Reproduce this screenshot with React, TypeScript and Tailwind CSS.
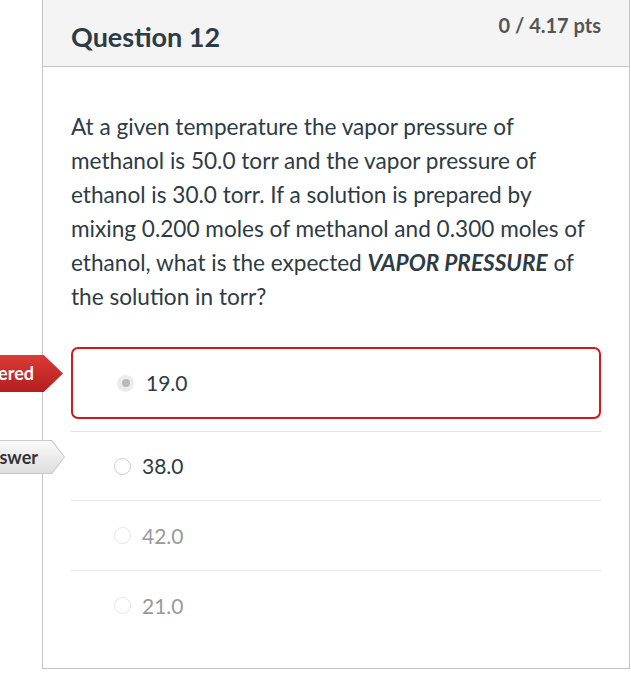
import React from "react";

// Tarjeta de pregunta de examen (estilo Canvas) con respuestas y etiquetas laterales.

function Radio({ state }: { state: "checked" | "empty" | "faded" }) {
  if (state === "checked") {
    return (
      <span className="flex h-[17px] w-[17px] shrink-0 items-center justify-center rounded-full bg-[#ececec]">
        <span className="h-[8px] w-[8px] rounded-full bg-[#b9b9b9]" />
      </span>
    );
  }
  return (
    <span
      className={
        state === "empty"
          ? "h-[17px] w-[17px] shrink-0 rounded-full border-[1.5px] border-[#cfcfcf] bg-white"
          : "h-[17px] w-[17px] shrink-0 rounded-full border-[1.5px] border-[#e6e6e6] bg-white"
      }
    />
  );
}

function RedTag() {
  return (
    <div className="absolute right-full top-[8px] mr-[8px] h-[37px] w-[160px] bg-gradient-to-b from-[#dc3b36] to-[#b31d1d] [clip-path:polygon(0_0,88%_0,100%_50%,88%_100%,0_100%)]">
      <div className="flex h-full items-center justify-end pr-[29px] text-[18px] font-bold text-white">
        You Answered
      </div>
    </div>
  );
}

function GrayTag() {
  return (
    <div className="absolute right-full top-[8px] mr-[6px] h-[34px] w-[160px] bg-[#c9c9c9] [clip-path:polygon(0_0,92%_0,100%_50%,92%_100%,0_100%)]">
      <div className="absolute inset-[1px] bg-gradient-to-b from-[#fafafa] to-[#dedede] [clip-path:polygon(0_0,92%_0,100%_50%,92%_100%,0_100%)]">
        <div className="flex h-full items-center justify-end pr-[26px] text-[18px] font-bold text-[#333]">
          Correct Answer
        </div>
      </div>
    </div>
  );
}

export default function App() {
  return (
    <div className="min-h-[700px] w-[631px] overflow-hidden bg-white font-['Lato','Liberation_Sans',sans-serif] text-[#2d3b45]">
      <div className="ml-[42px] mr-[1px] border-x border-b border-[#c4c4c4]">
        {/* Encabezado de la pregunta */}
        <div className="flex h-[67px] items-start justify-between border-b border-[#c4c4c4] bg-[#f4f4f4] px-[28px]">
          <h2 className="pt-[20px] text-[27px] font-bold leading-[33px]">Question 12</h2>
          <div className="pt-[13px] text-[20px] font-bold leading-[24px] text-[#555]">0 / 4.17 pts</div>
        </div>

        {/* Cuerpo */}
        <div className="px-[28px] pb-[28px] pt-[43px]">
          <p className="w-[522px] text-[22.6px] leading-[34px]">
            At a given temperature the vapor pressure of methanol is 50.0 torr and the vapor
            pressure of ethanol is 30.0 torr. If a solution is prepared by mixing 0.200 moles of
            methanol and 0.300 moles of ethanol, what is the expected{" "}
            <strong className="font-bold italic">VAPOR PRESSURE</strong> of the solution in torr?
          </p>

          <div className="mt-[33px] w-[530px]">
            <div className="relative">
              <RedTag />
              <div className="flex h-[72px] items-center gap-[12px] rounded-[7px] border-2 border-[#d0191c] pl-[44px]">
                <Radio state="checked" />
                <span className="text-[21px]">19.0</span>
              </div>
            </div>
            <div className="mt-[12px] border-t border-[#e3e3e3]" />

            <div className="relative">
              <GrayTag />
              <div className="flex h-[68px] items-center gap-[11px] pl-[43px]">
                <Radio state="empty" />
                <span className="text-[21px]">38.0</span>
              </div>
            </div>
            <div className="border-t border-[#e8e8e8]" />

            <div className="flex h-[69px] items-center gap-[11px] pl-[43px]">
              <Radio state="faded" />
              <span className="text-[21px] text-[#9a9a9a]">42.0</span>
            </div>
            <div className="border-t border-[#e8e8e8]" />

            <div className="flex h-[69px] items-center gap-[11px] pl-[43px]">
              <Radio state="faded" />
              <span className="text-[21px] text-[#9a9a9a]">21.0</span>
            </div>
          </div>
        </div>
      </div>
    </div>
  );
}
